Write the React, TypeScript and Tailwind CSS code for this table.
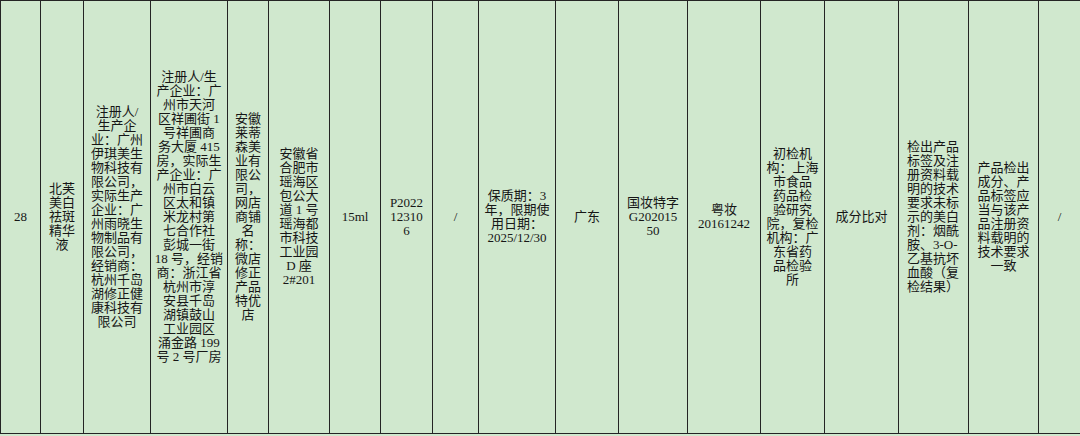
const cells: { w: string; lines: string[]; left?: boolean }[] = [
  { w: "w-[40px]", lines: ["28"] },
  { w: "w-[43px]", lines: ["北芙", "美白", "祛斑", "精华", "液"] },
  {
    w: "w-[67px]",
    lines: [
      "注册人/",
      "生产企",
      "业：广州",
      "伊琪美生",
      "物科技有",
      "限公司，",
      "实际生产",
      "企业：广",
      "州雨晓生",
      "物制品有",
      "限公司，",
      "经销商：",
      "杭州千岛",
      "湖修正健",
      "康科技有",
      "限公司",
    ],
  },
  {
    w: "w-[77px]",
    lines: [
      "注册人/生",
      "产企业：广",
      "州市天河",
      "区祥圃街 1",
      "号祥圃商",
      "务大厦 415",
      "房，实际生",
      "产企业：广",
      "州市白云",
      "区太和镇",
      "米龙村第",
      "七合作社",
      "彭城一街",
      "18 号，经销",
      "商：浙江省",
      "杭州市淳",
      "安县千岛",
      "湖镇鼓山",
      "工业园区",
      "涌金路 199",
      "号 2 号厂房",
    ],
  },
  {
    w: "w-[41px]",
    lines: ["安徽", "莱蒂", "森美", "业有", "限公", "司，", "网店", "商铺", "名", "称：", "微店", "修正", "产品", "特优", "店"],
  },
  {
    w: "w-[61px]",
    lines: ["安徽省", "合肥市", "瑶海区", "包公大", "道 1 号", "瑶海都", "市科技", "工业园", "D 座", "2#201"],
  },
  { w: "w-[51px]", lines: ["15ml"] },
  { w: "w-[52px]", lines: ["P2022", "12310", "6"] },
  { w: "w-[46px]", lines: ["/"] },
  { w: "w-[77px]", lines: ["保质期：3", "年，限期使", "用日期：", "2025/12/30"] },
  { w: "w-[63px]", lines: ["广东"] },
  { w: "w-[69px]", lines: ["国妆特字", "G202015", "50"] },
  { w: "w-[73px]", lines: ["粤妆", "20161242"] },
  {
    w: "w-[64px]",
    lines: ["初检机", "构：上海", "市食品", "药品检", "验研究", "院，复检", "机构：广", "东省药", "品检验", "所"],
  },
  { w: "w-[74px]", lines: ["成分比对"] },
  {
    w: "w-[70px]",
    left: true,
    lines: [
      "检出产品",
      "标签及注",
      "册资料载",
      "明的技术",
      "要求未标",
      "示的美白",
      "剂：烟酰",
      "胺、3-O-",
      "乙基抗坏",
      "血酸（复",
      "检结果）",
    ],
  },
  {
    w: "w-[70px]",
    lines: ["产品检出", "成分、产", "品标签应", "当与该产", "品注册资", "料载明的", "技术要求", "一致"],
  },
];

export default function App() {
  return (
    <div
      className="w-[1080px] h-[436px] bg-[#d0e8ce] text-[#161616] overflow-hidden"
      style={{ fontFamily: '"Liberation Serif", "Noto Sans CJK SC", serif' }}
    >
      <div className="flex h-[434px] border-y border-l border-[#242424]">
        {cells.map((c, i) => (
          <div
            key={i}
            className={`${c.w} shrink-0 border-r border-[#242424] flex items-center ${
              c.left ? "justify-start pl-[8px]" : "justify-center"
            }`}
          >
            <div className={`text-[13px] leading-[14px] whitespace-nowrap ${c.left ? "text-left" : "text-center"}`}>
              {c.lines.map((l, j) => (
                <div key={j}>{l}</div>
              ))}
            </div>
          </div>
        ))}
        <div className="flex-1 flex items-center justify-center text-[13px] leading-[14px]">/</div>
      </div>
    </div>
  );
}
